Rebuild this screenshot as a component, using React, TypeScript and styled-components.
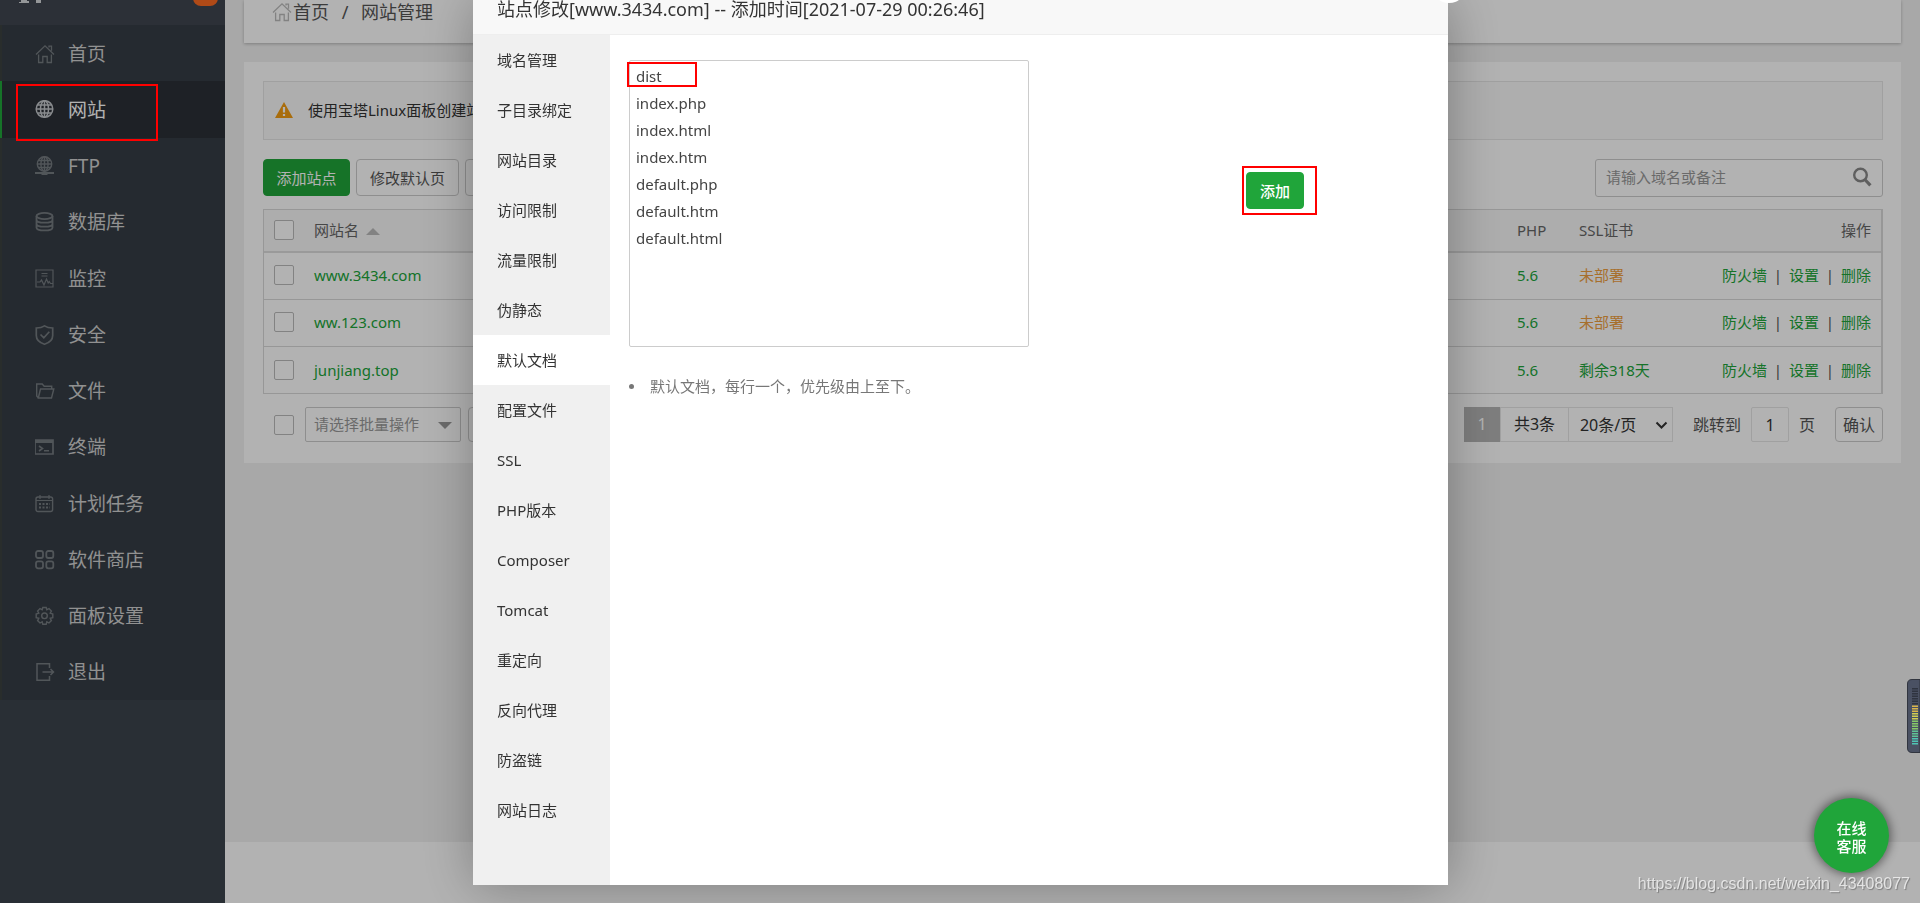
import React from 'react';
import styled, { createGlobalStyle, css } from 'styled-components';

const GREEN = '#20a53a';

const GlobalStyle = createGlobalStyle`
  * { box-sizing: border-box; }
  html, body { margin: 0; padding: 0; }
  body {
    background: #f1f1f1;
    color: #555;
    font: 15px/24px 'Noto Sans', 'Noto Sans CJK SC', sans-serif;
    overflow: hidden;
  }
  button, input, select, textarea { font: inherit; color: inherit; margin: 0; }
  a { color: inherit; text-decoration: none; }
`;

const Page = styled.div`
  display: flex;
  min-height: 100vh;
`;

const Sidebar = styled.aside`
  width: 225px;
  flex: none;
  background: #3c444d;
`;

const Brand = styled.div`
  position: relative;
  height: 25px;
  overflow: hidden;
  background: #3f454f;
`;

const BrandMark = styled.svg`
  display: block;
  margin-left: 18px;
`;

const MessageBadge = styled.span`
  position: absolute;
  left: 193px;
  top: -19px;
  width: 25px;
  height: 25px;
  border-radius: 8px;
  background: #fd6a22;
`;

const Menu = styled.nav`
  display: flex;
  flex-direction: column;
  height: 675px;
  background: #363d45;
`;

const MenuLink = styled.a<{ $active?: boolean }>`
  flex: 1;
  display: flex;
  align-items: center;
  gap: 13px;
  padding: 1px 0 0 33px;
  border-left: 2px solid ${p => (p.$active ? GREEN : '#3b413f')};
  background: ${p => (p.$active ? '#2c3037' : 'transparent')};
  color: ${p => (p.$active ? '#fff' : '#d0d0d0')};
  font-size: 19px;
  svg { color: ${p => (p.$active ? '#c4c8cc' : '#757b80')}; }
`;

const Highlight = styled.span<{ $left: number; $top: number; $w: number; $h: number }>`
  position: absolute;
  left: ${p => p.$left}px;
  top: ${p => p.$top}px;
  width: ${p => p.$w}px;
  height: ${p => p.$h}px;
  border: 2px solid #f00;
  pointer-events: none;
  z-index: 20;
`;

const Main = styled.main`
  flex: 1;
  min-width: 0;
  display: flex;
  flex-direction: column;
`;

const Breadcrumb = styled.div`
  display: flex;
  align-items: flex-start;
  height: 43px;
  margin: 0 19px;
  padding-left: 28px;
  background: #fff;
  box-shadow: 0 1px 3px rgba(0, 0, 0, 0.25);
  color: #555;
  font-size: 18px;
  svg { color: #bbb; margin: 2px 1px 0 0; }
`;

const Slash = styled.span`
  width: 32px;
  text-align: center;
`;

const Card = styled.section`
  display: flex;
  flex-direction: column;
  margin: 19px 19px 0;
  padding: 19px 18px 21px 19px;
  background: #fff;
`;

const Notice = styled.div`
  display: flex;
  align-items: center;
  gap: 15px;
  height: 59px;
  padding: 0 0 2px 11px;
  border: 1px solid #e6e6e6;
  background: #fafafa;
  color: #333;
`;

const Toolbar = styled.div`
  display: flex;
  gap: 6px;
  margin: 19px 0 12px;
`;

const Button = styled.button<{ $primary?: boolean; $w: number; $h?: number }>`
  width: ${p => p.$w}px;
  height: ${p => p.$h ?? 37}px;
  padding: 0;
  border: 1px solid ${p => (p.$primary ? GREEN : '#ccc')};
  border-radius: 4px;
  background: ${p => (p.$primary ? GREEN : '#fff')};
  color: ${p => (p.$primary ? '#fff' : '#555')};
  white-space: nowrap;
`;

const SearchBox = styled.label`
  display: flex;
  align-items: center;
  width: 288px;
  height: 38px;
  margin-left: auto;
  padding: 0 10px 2px;
  border: 1px solid #ccc;
  border-radius: 3px;
  color: #888;
`;

const SearchInput = styled.input`
  flex: 1;
  min-width: 0;
  padding: 0;
  border: 0;
  outline: 0;
  background: transparent;
  &::placeholder { color: #999; opacity: 1; }
`;

const SiteTable = styled.table`
  width: 100%;
  border-collapse: separate;
  border-spacing: 0;
  table-layout: fixed;
  border: 1px solid #d9d9d9;
  border-right-width: 2px;
  border-bottom: 0;
  th, td { padding: 0; text-align: left; font-weight: 400; white-space: nowrap; }
  th { height: 43px; background: #f8f8f8; border-bottom: 2px solid #ddd; color: #666; }
  td { height: 47px; border-bottom: 1px solid #d9d9d9; color: ${GREEN}; }
  th, tr:not(:last-child) td { padding-bottom: 2px; }
  th:first-child, td:first-child { padding-left: 10px; }
  th:last-child, td:last-child { padding-right: 10px; text-align: right; }
`;

const Tick = styled.input`
  appearance: none;
  display: block;
  flex: none;
  width: 20px;
  height: 20px;
  border: 1px solid #bbb;
  border-radius: 2px;
  background: #fff;
`;

const SortArrow = styled.span`
  display: inline-block;
  margin-left: 7px;
  vertical-align: 1px;
  border: 7px solid transparent;
  border-top: 0;
  border-bottom: 7px solid #bbb;
`;

const Pending = styled.a`
  color: #f0a040;
`;

const Separator = styled.span`
  display: inline-block;
  width: 22px;
  text-align: center;
  color: #555;
`;

const TableFooter = styled.div`
  display: flex;
  align-items: center;
  height: 35px;
  margin-top: 13px;
  padding-left: 11px;
`;

const BatchWrap = styled.div`
  position: relative;
  margin: 0 7px 0 11px;
`;

const BatchSelect = styled.select`
  appearance: none;
  display: block;
  width: 156px;
  height: 35px;
  padding: 0 8px 1px;
  border: 1px solid #ccc;
  border-radius: 2px;
  background: #fff;
  color: #999;
`;

const BatchCaret = styled.span`
  position: absolute;
  right: 9px;
  top: 15px;
  border: 7px solid transparent;
  border-bottom: 0;
  border-top-color: #999;
  pointer-events: none;
`;

const Pager = styled.div`
  display: flex;
  align-items: center;
  margin-left: auto;
  font-size: 16px;
`;

const pagerBox = css`
  height: 35px;
  border: 1px solid #e6e6e6;
  background: #fff;
  color: #333;
  text-align: center;
  line-height: 32px;
`;

const CurrentPage = styled.span`
  ${pagerBox}
  width: 36px;
  border-color: #b5b5b5;
  background: #b5b5b5;
  color: #fff;
`;

const Total = styled.span`
  ${pagerBox}
  width: 69px;
`;

const PageSizeWrap = styled.div`
  position: relative;
  margin-right: 20px;
  svg { position: absolute; right: 5px; top: 12px; color: #333; pointer-events: none; }
`;

const PageSize = styled.select`
  ${pagerBox}
  appearance: none;
  display: block;
  width: 104px;
  padding: 0 11px;
  border-left: 0;
  text-align: left;
`;

const JumpLabel = styled.label`
  display: flex;
  align-items: center;
  gap: 10px;
  margin-right: 20px;
`;

const JumpInput = styled.input`
  ${pagerBox}
  width: 38px;
  padding: 0;
  border-radius: 2px;
`;

const Footer = styled.footer`
  height: 61px;
  margin-top: auto;
  background: #fff;
`;

const Shade = styled.div`
  position: fixed;
  inset: 0;
  z-index: 5;
  background: rgba(0, 0, 0, 0.3);
`;

const Dialog = styled.div`
  position: fixed;
  z-index: 10;
  top: 0;
  bottom: 18px;
  left: 50%;
  width: 975px;
  margin-left: -487px;
  display: flex;
  flex-direction: column;
  background: #fff;
  color: #333;
  box-shadow: 1px 1px 50px rgba(0, 0, 0, 0.3);
`;

const DialogTitle = styled.h2`
  flex: none;
  height: 35px;
  margin: 0;
  padding-left: 24px;
  border-bottom: 1px solid #eee;
  background: #f8f8f8;
  font-size: 18px;
  font-weight: 400;
  line-height: 18px;
`;

const CloseButton = styled.button`
  position: absolute;
  right: -19px;
  top: -33px;
  width: 36px;
  height: 36px;
  padding: 0;
  border: 0;
  border-radius: 50%;
  background: #fff;
`;

const DialogBody = styled.div`
  flex: 1;
  display: flex;
`;

const Tabs = styled.nav`
  width: 137px;
  background: #f0f0f0;
`;

const Tab = styled.a<{ $active?: boolean }>`
  display: block;
  padding-left: 24px;
  line-height: 50px;
  background: ${p => (p.$active ? '#fff' : 'transparent')};
`;

const TabPanel = styled.div`
  flex: 1;
  padding: 25px 19px;
`;

const DocRow = styled.div`
  position: relative;
  display: flex;
  align-items: flex-start;
  gap: 217px;
`;

const DocList = styled.textarea`
  display: block;
  width: 400px;
  height: 287px;
  padding: 2px 6px;
  border: 1px solid #ccc;
  border-radius: 2px;
  outline: 0;
  resize: none;
  color: #444;
  line-height: 27px;
`;

const AddSlot = styled.div`
  position: relative;
  padding-top: 112px;
`;

const AddButton = styled(Button)`
  display: block;
  font-weight: 500;
`;

const Help = styled.ul`
  margin: 27px 0 0;
  padding: 0;
  list-style: none;
  color: #777;
  li { display: flex; align-items: center; gap: 16px; }
  li::before {
    content: '';
    width: 5px;
    height: 5px;
    border-radius: 50%;
    background: #777;
  }
`;

const Service = styled.button`
  position: fixed;
  z-index: 12;
  right: 31px;
  bottom: 30px;
  width: 75px;
  height: 75px;
  padding: 3px 22px 0;
  border: 0;
  border-radius: 50%;
  background: ${GREEN};
  box-shadow: 0 0 10px 2px rgba(0, 0, 0, 0.45);
  color: #fff;
  font-weight: 500;
  line-height: 18px;
`;

const Watermark = styled.div`
  position: fixed;
  z-index: 13;
  right: 10px;
  bottom: 7px;
  color: rgba(255, 255, 255, 0.7);
  font: 16px/24px 'Liberation Sans', sans-serif;
  text-shadow: 1px 1px 1px rgba(0, 0, 0, 0.3);
`;

const Meter = styled.svg`
  position: fixed;
  z-index: 12;
  right: 0;
  top: 679px;
`;

const HomeIcon = () => (
  <svg width="20" height="20" viewBox="0 0 20 20" fill="none" stroke="currentColor" strokeWidth="1.3">
    <path d="M1 10.5 10 1.8l9 8.7M14 3.5V2.2h2.5v4.6M3.6 10.5v8h4.2v-6h4.4v6h4.2v-8" />
  </svg>
);

const icons: Record<string, React.ReactNode> = {
  web: (
    <g strokeWidth="1.5">
      <circle cx="9.5" cy="9" r="8.3" />
      <ellipse cx="9.5" cy="9" rx="4" ry="8.3" />
      <path d="M9.500 .8v16.400M1.200 9h16.600M2.500 5h14M2.500 13h14" />
    </g>
  ),
  ftp: (
    <g strokeWidth="1.4">
      <circle cx="9.5" cy="8" r="7.2" />
      <ellipse cx="9.5" cy="8" rx="3.6" ry="7.2" />
      <path d="M9.500 .8v14.400M2.300 8h14.400M3.500 4.500h12M3.500 11.500h12" />
      <path d="M0 17h19M6.500 18h6" strokeWidth="2" />
    </g>
  ),
  db: (
    <g strokeWidth="1.8">
      <ellipse cx="9.5" cy="4" rx="8" ry="3.1" />
      <path d="M1.500 4v11.400c0 4 16 4 16 0V4M1.500 7.700c0 4 16 4 16 0M1.500 11.700c0 4 16 4 16 0" />
    </g>
  ),
  monitor: (
    <g>
      <path d="M1 1h17v17H1zM6.500 4.500h6M6.500 7h6M2 13h3l1.500-2 2.500 5 2.500-6 1.700 4 1-1.500 1.300 2h2" />
    </g>
  ),
  shield: (
    <g strokeWidth="1.7">
      <path d="M9.500 .9C7.500 2.300 4.500 3 1.300 3v7.500c0 4.500 4.200 7.500 8.200 8.700 4-1.200 8.200-4.200 8.200-8.700V3c-3.200 0-6.200-.7-8.200-2.100zM5.500 9.500l3.300 3.300 5.500-6" />
    </g>
  ),
  folder: (
    <path d="M3.500 17 1.700 15V3h5.500l2 2.300h7.500V8M3.300 17 5.500 8h13.300l-2.300 9z" strokeWidth="1.400" />
  ),
  terminal: (
    <g>
      <path d="M0 3h18v14H0z" strokeWidth="1.700" />
      <path d="M0 4.500h18" strokeWidth="3" />
      <path d="M4 9l3.500 2.500L4 14M9 13.800h5" strokeWidth="1.600" />
    </g>
  ),
  calendar: (
    <g>
      <rect x="1" y="3" width="16.600" height="14.500" rx="2" strokeWidth="1.400" />
      <path d="M1 6.500h16.500M5 1v4M14 1v4" />
      <path d="M4 10h11M4 13.500h11" strokeWidth="2" strokeDasharray="2 1.500" />
    </g>
  ),
  store: (
    <g strokeWidth="1.800">
      <rect x="1" y="1" width="7" height="7" rx="2" />
      <rect x="11.300" y="1" width="7" height="7" rx="2" />
      <rect x="1" y="11.300" width="7" height="7" rx="2" />
      <rect x="11.300" y="11.300" width="7" height="7" rx="2" />
    </g>
  ),
  gear: (
    <g strokeWidth="1.400">
      <path d="M7.800 1.500h3.400l.6 2.300 2.200-1.200 2.400 2.400-1.200 2.200 2.600.8v3.600l-2.600.7 1.200 2.300-2.400 2.400-2.200-1.200-.6 2.500H7.800l-.6-2.500L5 17l-2.400-2.400 1.200-2.300-2.600-.7V8l2.600-.8L2.600 5 5 2.600l2.200 1.200z" />
      <circle cx="9.500" cy="9.800" r="2.800" />
    </g>
  ),
  exit: (
    <path d="M14.500 6V1.700H2v16.600h12.500V14M7.500 10H18M15.500 7l3 3-3 3" strokeWidth="1.500" />
  ),
};

const Icon = ({ name }: { name: string }) =>
  name === 'home' ? <HomeIcon /> : (
    <svg width="20" height="20" viewBox="0 0 20 20" fill="none" stroke="currentColor" strokeWidth="1.2">
      {icons[name]}
    </svg>
  );

const menu = [
  ['home', '首页'], ['web', '网站'], ['ftp', 'FTP'], ['db', '数据库'],
  ['monitor', '监控'], ['shield', '安全'], ['folder', '文件'], ['terminal', '终端'],
  ['calendar', '计划任务'], ['store', '软件商店'], ['gear', '面板设置'], ['exit', '退出'],
];

const sites = [
  { name: 'www.3434.com', php: '5.6', ssl: '' },
  { name: 'ww.123.com', php: '5.6', ssl: '' },
  { name: 'junjiang.top', php: '5.6', ssl: '剩余318天' },
];

const tabs = [
  '域名管理', '子目录绑定', '网站目录', '访问限制', '流量限制', '伪静态', '默认文档', '配置文件',
  'SSL', 'PHP版本', 'Composer', 'Tomcat', '重定向', '反向代理', '防盗链', '网站日志',
];

const docs = ['dist', 'index.php', 'index.html', 'index.htm', 'default.php', 'default.htm', 'default.html'];

const meterBars = Array.from({ length: 23 }, (_, i) => i);
const meterColor = (i: number) =>
  i < 7 ? '#2f3440' : i < 10 ? '#d9b64a' : i < 13 ? '#d2cf52' : i < 17 ? '#86c968' : i < 20 ? '#5fc495' : '#4fc4b4';

const SiteCol = styled.col<{ $w?: number }>`
  width: ${p => (p.$w ? `${p.$w}px` : 'auto')};
`;

export default function App() {
  return (
    <>
      <GlobalStyle />
      <Page>
        <Sidebar>
          <Brand>
            <BrandMark width="26" height="4" viewBox="0 0 26 4" fill="#d5d7da">
              <path d="M3 0h6v1h2v2H1V2h2zM18 0h5v3h-5z" />
            </BrandMark>
            <MessageBadge />
          </Brand>
          <Menu>
            {menu.map(([icon, label]) => (
              <MenuLink key={icon} href="#" $active={icon === 'web'}>
                <Icon name={icon} />
                {label}
              </MenuLink>
            ))}
          </Menu>
        </Sidebar>
        <Main>
          <Breadcrumb>
            <HomeIcon />
            <a href="#">首页</a>
            <Slash>/</Slash>
            <a href="#">网站管理</a>
          </Breadcrumb>
          <Card>
            <Notice>
              <svg width="18" height="16" viewBox="0 0 18 16">
                <path d="M9 0l9 16H0z" fill="#f39c12" />
                <path d="M9 5v5.500M9 12v2" stroke="#fff" strokeWidth="2.200" />
              </svg>
              使用宝塔Linux面板创建站点
            </Notice>
            <Toolbar>
              <Button $primary $w={87}>添加站点</Button>
              <Button $w={103}>修改默认页</Button>
              <Button $w={103} aria-label="默认站点" />
              <SearchBox>
                <SearchInput placeholder="请输入域名或备注" />
                <svg width="20" height="20" viewBox="0 0 20 20" fill="none" stroke="currentColor">
                  <circle cx="8.500" cy="8" r="6.300" strokeWidth="2.400" />
                  <path d="M12.800 12.500l5.600 5.800" strokeWidth="3.200" />
                </svg>
              </SearchBox>
            </Toolbar>
            <SiteTable>
              <colgroup>
                <SiteCol $w={50} />
                <SiteCol />
                <SiteCol $w={62} />
                <SiteCol $w={122} />
                <SiteCol $w={180} />
              </colgroup>
              <thead>
                <tr>
                  <th><Tick type="checkbox" aria-label="全选" /></th>
                  <th>网站名<SortArrow /></th>
                  <th>PHP</th>
                  <th>SSL证书</th>
                  <th>操作</th>
                </tr>
              </thead>
              <tbody>
                {sites.map(s => (
                  <tr key={s.name}>
                    <td><Tick type="checkbox" aria-label={s.name} /></td>
                    <td><a href="#">{s.name}</a></td>
                    <td><a href="#">{s.php}</a></td>
                    <td>{s.ssl ? <a href="#">{s.ssl}</a> : <Pending href="#">未部署</Pending>}</td>
                    <td>
                      <a href="#">防火墙</a><Separator>|</Separator>
                      <a href="#">设置</a><Separator>|</Separator>
                      <a href="#">删除</a>
                    </td>
                  </tr>
                ))}
              </tbody>
            </SiteTable>
            <TableFooter>
              <Tick type="checkbox" aria-label="批量选择" />
              <BatchWrap>
                <BatchSelect aria-label="批量操作"><option>请选择批量操作</option></BatchSelect>
                <BatchCaret />
              </BatchWrap>
              <Button $w={80} $h={35} aria-label="批量操作" />
              <Pager>
                <CurrentPage>1</CurrentPage>
                <Total>共3条</Total>
                <PageSizeWrap>
                  <PageSize aria-label="每页条数"><option>20条/页</option></PageSize>
                  <svg width="13" height="12" viewBox="0 0 13 12" fill="none" stroke="currentColor" strokeWidth="2">
                    <path d="M1.500 3.500l5 5 5-5" />
                  </svg>
                </PageSizeWrap>
                <JumpLabel>跳转到<JumpInput defaultValue="1" />页</JumpLabel>
                <Button $w={48} $h={35}>确认</Button>
              </Pager>
            </TableFooter>
          </Card>
          <Footer />
        </Main>
      </Page>
      <Shade />
      <Highlight $left={16} $top={84} $w={142} $h={57} />
      <Dialog role="dialog" aria-labelledby="dialog-title">
        <DialogTitle id="dialog-title">站点修改[www.3434.com] -- 添加时间[2021-07-29 00:26:46]</DialogTitle>
        <CloseButton aria-label="关闭" />
        <DialogBody>
          <Tabs>
            {tabs.map(t => <Tab key={t} href="#" $active={t === '默认文档'}>{t}</Tab>)}
          </Tabs>
          <TabPanel>
            <DocRow>
              <DocList aria-label="默认文档" spellCheck={false} defaultValue={docs.join('\n')} />
              <Highlight $left={-2} $top={2} $w={70} $h={25} />
              <AddSlot>
                <AddButton $primary $w={58}>添加</AddButton>
                <Highlight $left={-4} $top={106} $w={75} $h={49} />
              </AddSlot>
            </DocRow>
            <Help><li>默认文档，每行一个，优先级由上至下。</li></Help>
          </TabPanel>
        </DialogBody>
      </Dialog>
      <Meter width="13" height="74" viewBox="0 0 13 74">
        <path d="M13 .5H5Q.5 .5 .5 5v64q0 4.500 4.500 4.500h8z" fill="#4a5163" stroke="#31353f" />
        {meterBars.map(i => (
          <rect key={i} x="5" y={9 + i * 2.5} width="6" height="1.5" fill={meterColor(i)} />
        ))}
      </Meter>
      <Service>在线客服</Service>
      <Watermark>https://blog.csdn.net/weixin_43408077</Watermark>
    </>
  );
}
